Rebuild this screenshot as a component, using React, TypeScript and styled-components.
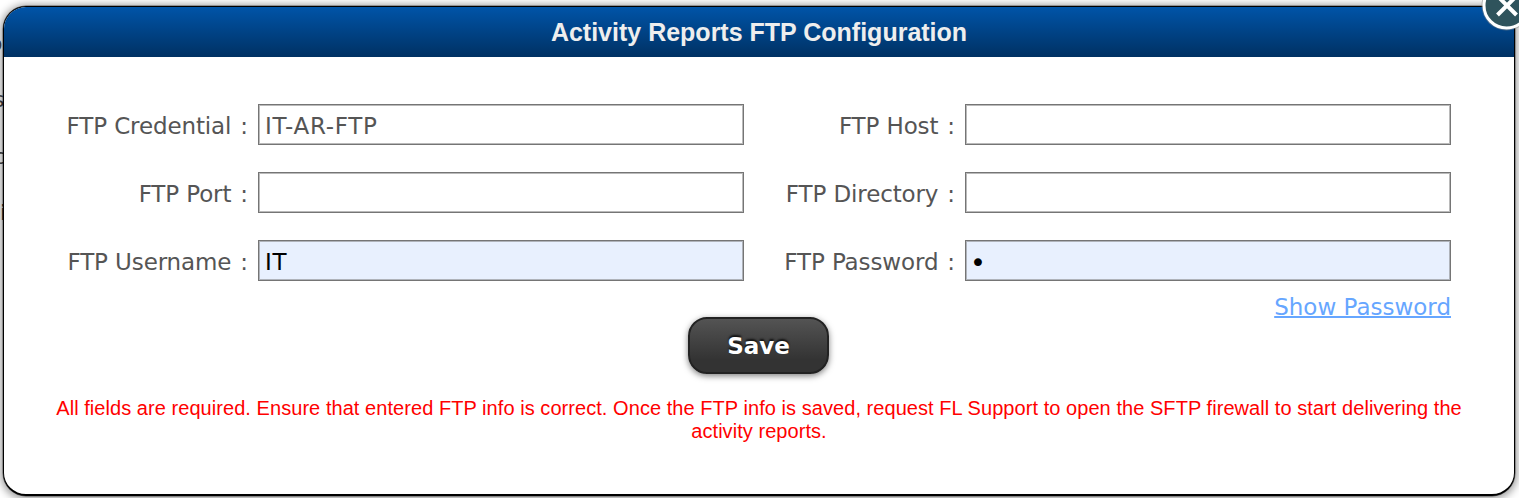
import React from "react";
import styled, { createGlobalStyle } from "styled-components";

const Global = createGlobalStyle`
  * { box-sizing: border-box; }
  body { margin: 0; background: #fff; overflow: hidden; }
`;

const verdana = `"DejaVu Sans", sans-serif`;

const Page = styled.div`
  position: relative;
  width: 1519px;
  height: 498px;
  padding: 6px 0 0 3px;
  overflow: hidden;
  background: #fff;
`;

const Dialog = styled.section`
  position: relative;
  width: 1512px;
  height: 490px;
  display: flex;
  flex-direction: column;
  border: solid #000;
  border-width: 1px 1px 2px 1px;
  border-radius: 23px;
  background: #fff;
  overflow: hidden;
  box-shadow: 0 0 0 0.5px rgba(0, 0, 0, 0.5), 0 1px 9px 2px rgba(0, 0, 0, 0.42);
`;

const Header = styled.header`
  flex: none;
  height: 50px;
  display: flex;
  align-items: center;
  justify-content: center;
  background: linear-gradient(#0054a8, #003163);
`;

const Title = styled.h1`
  margin: 0;
  color: #eee;
  font: bold 25px/30px "Liberation Sans", Arial, sans-serif;
  white-space: nowrap;
`;

const Form = styled.form`
  display: flex;
  flex-direction: column;
  padding: 47px 63px 0 54px;
`;

const Fields = styled.div`
  display: grid;
  grid-template-columns: 190px 486px 201px 486px;
  column-gap: 10px;
  grid-auto-rows: 41px;
  row-gap: 27px;
`;

const Label = styled.label`
  display: flex;
  justify-content: flex-end;
  align-items: center;
  gap: 9px;
  padding: 2px 0 0;
  color: #555;
  font: 23px/26px ${verdana};
  letter-spacing: -0.12px;
  white-space: nowrap;
`;

const Input = styled.input<{ $filled?: boolean }>`
  width: 486px;
  height: 41px;
  margin: 0;
  padding: ${(p) => (p.type === "password" ? "3px 4px 0" : "2px 6px 0")};
  border: 1px solid #757575;
  border-radius: 0;
  outline: none;
  background: ${(p) => (p.$filled ? "#e8f0fe" : "#fff")};
  box-shadow: inset 0 0 0 1px rgba(118, 118, 118, 0.5);
  color: ${(p) => (p.$filled ? "#000" : "#555")};
  font: ${(p) => (p.type === "password" ? "27px" : "23px")} ${verdana};
  letter-spacing: 0.7px;
`;

const ShowPassword = styled.a`
  align-self: flex-end;
  height: 26px;
  margin-top: 13px;
  color: #66a6ff;
  font: 23px/26px ${verdana};
  text-decoration: underline;
  text-decoration-thickness: 2px;
  white-space: nowrap;
`;

const SaveButton = styled.button`
  width: 141px;
  height: 57px;
  margin: -3px 0 0 630px;
  padding: 1px 0 0;
  border: 2px solid #222;
  border-radius: 19px;
  background: linear-gradient(#555, #333 75%) border-box;
  box-shadow: 0 2px 6px rgba(0, 0, 0, 0.5);
  color: #fff;
  font: bold 23px ${verdana};
  text-shadow: 0 -2px 2px #111;
`;

const Notice = styled.p`
  margin: 23px -19px 0 -10px;
  color: #f00;
  font: 20px/23px "Liberation Sans", Arial, sans-serif;
  letter-spacing: 0.055px;
  text-align: center;
`;

const CloseButton = styled.button`
  position: absolute;
  left: 1480px;
  top: -20px;
  width: 52px;
  height: 52px;
  padding: 0;
  border: 0;
  background: none;
`;

const Behind = styled.span<{ $top: number; $left: number }>`
  position: absolute;
  left: ${(p) => p.$left}px;
  top: ${(p) => p.$top}px;
  color: #444;
  font: 22px/26px ${verdana};
`;

interface FieldProps {
  label: string;
  value: string;
  type?: string;
  $filled?: boolean;
}

const Field = ({ label, ...rest }: FieldProps) => (
  <>
    <Label>
      <span>{label}</span>
      <span>:</span>
    </Label>
    <Input aria-label={label} readOnly {...rest} />
  </>
);

export default function App() {
  return (
    <Page>
      <Global />
      <Behind $left={-11} $top={31}>o</Behind>
      <Behind $left={-7} $top={87}>s</Behind>
      <Behind $left={-7} $top={144}>c</Behind>
      <Behind $left={0} $top={200}>i</Behind>
      <Dialog>
        <Header>
          <Title>Activity Reports FTP Configuration</Title>
        </Header>
        <Form>
          <Fields>
            <Field label="FTP Credential" value="IT-AR-FTP" />
            <Field label="FTP Host" value="" />
            <Field label="FTP Port" value="" />
            <Field label="FTP Directory" value="" />
            <Field label="FTP Username" value="IT" $filled />
            <Field label="FTP Password" value="x" type="password" $filled />
          </Fields>
          <ShowPassword>Show Password</ShowPassword>
          <SaveButton type="button">Save</SaveButton>
          <Notice>
            All fields are required. Ensure that entered FTP info is correct. Once the FTP info is saved, request FL Support to open the SFTP firewall to start delivering the activity reports.
          </Notice>
        </Form>
      </Dialog>
      <CloseButton type="button" aria-label="Close">
        <svg width="52" height="52" viewBox="0 0 52 52">
          <circle cx="26.500" cy="25.500" r="25" fill="#888" opacity="0.5" />
          <circle cx="26.500" cy="25.500" r="22.500" fill="#2f535c" stroke="#fff" strokeWidth="3" />
          <path d="M17.500 16 L36.500 35 M36.500 16 L17.500 35" stroke="#fff" strokeWidth="4" />
        </svg>
      </CloseButton>
    </Page>
  );
}
